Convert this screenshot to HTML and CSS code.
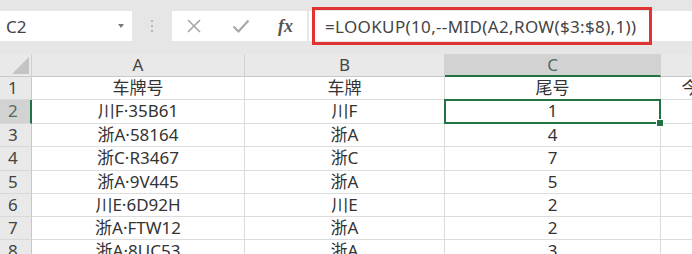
FILE: index.html
```html
<!DOCTYPE html>
<html lang="zh-CN">
<head>
<meta charset="utf-8">
<title>Sheet</title>
<link rel="stylesheet" href="styles.css">
</head>
<body>
<div class="app">
  <div class="toolbar">
    <div class="namebox">
      <span class="name">C2</span>
      <span class="caret"></span>
    </div>
    <div class="dots"><i></i><i></i><i></i></div>
    <div class="fxbox">
      <svg class="ico" width="16" height="16" viewBox="0 0 16 16"><path d="M2 2L14 14M14 2L2 14" stroke="#a6a6a6" stroke-width="1.6" fill="none"/></svg>
      <svg class="ico" width="18" height="16" viewBox="0 0 18 16"><path d="M1.5 8.5L6.5 13.5L16.5 2.5" stroke="#a6a6a6" stroke-width="2" fill="none"/></svg>
      <span class="fx">fx</span>
    </div>
    <div class="formula">
      <span class="ftext">=LOOKUP(10,--MID(A2,ROW($3:$8),1))</span>
      <div class="highlight"></div>
    </div>
  </div>
  <div class="sheet">
    <div class="corner"><span class="tri"></span></div>
    <div class="colh">A</div>
    <div class="colh">B</div>
    <div class="colh sel">C</div>
    <div class="colh"></div>

    <div class="rowh r1">1</div>
    <div class="cell r1">车牌号</div>
    <div class="cell r1">车牌</div>
    <div class="cell r1">尾号</div>
    <div class="cell r1 d">今天</div>

    <div class="rowh r2 sel">2</div>
    <div class="cell r2">川F·35B61</div>
    <div class="cell r2">川F</div>
    <div class="cell r2 active">1<span class="handle"></span></div>
    <div class="cell r2"></div>

    <div class="rowh r3">3</div>
    <div class="cell r3">浙A·58164</div>
    <div class="cell r3">浙A</div>
    <div class="cell r3">4</div>
    <div class="cell r3"></div>

    <div class="rowh r4">4</div>
    <div class="cell r4">浙C·R3467</div>
    <div class="cell r4">浙C</div>
    <div class="cell r4">7</div>
    <div class="cell r4"></div>

    <div class="rowh r5">5</div>
    <div class="cell r5">浙A·9V445</div>
    <div class="cell r5">浙A</div>
    <div class="cell r5">5</div>
    <div class="cell r5"></div>

    <div class="rowh r6">6</div>
    <div class="cell r6">川E·6D92H</div>
    <div class="cell r6">川E</div>
    <div class="cell r6">2</div>
    <div class="cell r6"></div>

    <div class="rowh r7">7</div>
    <div class="cell r7">浙A·FTW12</div>
    <div class="cell r7">浙A</div>
    <div class="cell r7">2</div>
    <div class="cell r7"></div>

    <div class="rowh r8">8</div>
    <div class="cell r8">浙A·8UC53</div>
    <div class="cell r8">浙A</div>
    <div class="cell r8">3</div>
    <div class="cell r8"></div>
  </div>
</div>
</body>
</html>
```
FILE: styles.css
```css
html, body {
  margin: 0;
  padding: 0;
}
body {
  width: 692px;
  height: 254px;
  overflow: hidden;
  background: #ffffff;
  font-family: "Noto Sans", "Noto Sans CJK SC", sans-serif;
  color: #333333;
}
.app {
  width: 692px;
}
.toolbar {
  height: 54px;
  background: #e6e6e6;
  display: flex;
  align-items: flex-start;
  box-sizing: border-box;
  padding-top: 11px;
}
.namebox {
  width: 132px;
  height: 30px;
  background: #ffffff;
  display: flex;
  align-items: center;
  justify-content: space-between;
  box-sizing: border-box;
  padding: 0 6px 0 6px;
}
.name {
  font-family: "Noto Sans", sans-serif;
  font-size: 17px;
  color: #444444;
}
.caret {
  width: 0;
  height: 0;
  border-left: 3.5px solid transparent;
  border-right: 3.5px solid transparent;
  border-top: 4px solid #7a7a7a;
  margin-right: 2px;
}
.dots {
  width: 40px;
  height: 30px;
  display: flex;
  flex-direction: column;
  align-items: center;
  justify-content: center;
  gap: 3px;
}
.dots i {
  display: block;
  width: 2px;
  height: 2px;
  background: #b5b5b5;
}
.fxbox {
  width: 135px;
  height: 30px;
  background: #ffffff;
  display: flex;
  align-items: center;
  box-sizing: border-box;
  padding-left: 14px;
  gap: 30px;
}
.fx {
  font-family: "Liberation Serif", serif;
  font-style: italic;
  font-weight: bold;
  font-size: 18px;
  color: #555555;
  margin-left: -2px;
}
.formula {
  position: relative;
  flex: 1;
  height: 30px;
  margin-left: 2px;
  background: #ffffff;
  display: flex;
  align-items: center;
  box-sizing: border-box;
  padding-left: 16px;
}
.ftext {
  font-family: "Noto Sans", sans-serif;
  font-size: 17px;
  letter-spacing: 0.35px;
  color: #444444;
  white-space: nowrap;
}
.highlight {
  position: absolute;
  left: 3px;
  top: -4px;
  width: 340px;
  height: 38px;
  box-sizing: border-box;
  border: 3px solid #e03434;
}
.sheet {
  display: grid;
  grid-template-columns: 32px 213px 200px 216px 76px;
  grid-template-rows: 23px 23px 24px 23px 24px 23px 23px 23px 23px;
  font-size: 17px;
}
.corner {
  background: #e9e9e9;
  border-right: 1px solid #d0d0d0;
  border-bottom: 1px solid #c8c8c8;
  box-sizing: border-box;
  position: relative;
}
.tri {
  position: absolute;
  right: 2px;
  bottom: 2px;
  width: 0;
  height: 0;
  border-left: 17px solid transparent;
  border-bottom: 17px solid #c4c4c4;
}
.colh {
  background: #e9e9e9;
  border-right: 1px solid #d0d0d0;
  border-bottom: 1px solid #c8c8c8;
  box-sizing: border-box;
  text-align: center;
  line-height: 22px;
  color: #444444;
}
.colh.sel {
  background: #d2d2d2;
  border-bottom: 2px solid #217346;
  color: #4f6b5c;
}
.rowh {
  background: #e9e9e9;
  border-right: 1px solid #c8c8c8;
  border-bottom: 1px solid #d8d8d8;
  box-sizing: border-box;
  padding-left: 8px;
  line-height: 22px;
  color: #444444;
}
.rowh.sel {
  background: #d2d2d2;
  border-right: 2px solid #217346;
  color: #4f6b5c;
}
.cell {
  border-right: 1px solid #dcdcdc;
  border-bottom: 1px solid #dcdcdc;
  box-sizing: border-box;
  text-align: center;
  line-height: 22px;
  white-space: nowrap;
  background: #ffffff;
}
.active {
  position: relative;
}
.active::after {
  content: "";
  position: absolute;
  left: -1px;
  top: -1px;
  right: -1px;
  bottom: -1px;
  border: 2px solid #217346;
}
.handle {
  position: absolute;
  right: -4px;
  bottom: -4px;
  width: 6px;
  height: 6px;
  background: #217346;
  border: 1px solid #ffffff;
  z-index: 2;
}
```
